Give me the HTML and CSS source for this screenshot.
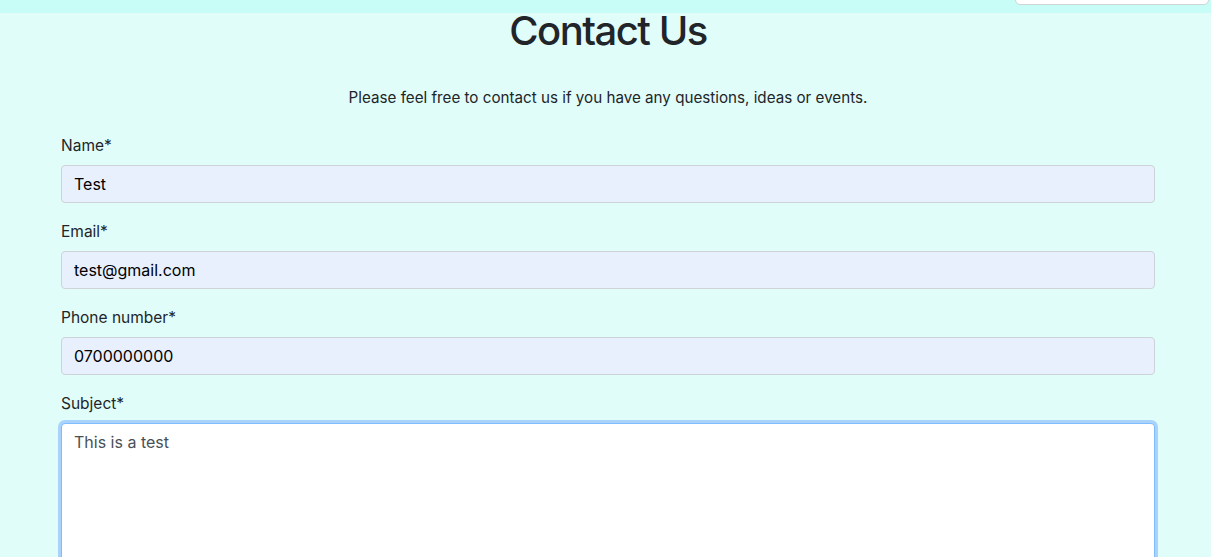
FILE: index.html
```html
<!DOCTYPE html>
<html lang="en">
<head>
<meta charset="utf-8">
<title>Contact Us</title>
<link rel="stylesheet" href="styles.css">
</head>
<body>
<header class="topbar">
  <div class="topbar-box"></div>
</header>
<main class="container">
  <h1 class="title">Contact Us</h1>
  <p class="intro">Please feel free to contact us if you have any questions, ideas or events.</p>
  <form class="contact-form">
    <div class="form-group">
      <label class="label" for="name">Name*</label>
      <input class="control autofill" id="name" type="text" value="Test">
    </div>
    <div class="form-group">
      <label class="label" for="email">Email*</label>
      <input class="control autofill" id="email" type="email" value="test@gmail.com">
    </div>
    <div class="form-group">
      <label class="label" for="phone">Phone number*</label>
      <input class="control autofill" id="phone" type="text" value="0700000000">
    </div>
    <div class="form-group">
      <label class="label" for="subject">Subject*</label>
      <textarea class="control textarea focused" id="subject">This is a test</textarea>
    </div>
  </form>
</main>
</body>
</html>
```

FILE: styles.css
```css
html, body {
  margin: 0;
  padding: 0;
}
body {
  background: #e1fdfa;
  font-family: Inter, "Noto Sans", "Liberation Sans", sans-serif;
  color: #212529;
  font-size: 16px;
  line-height: 24px;
  overflow: hidden;
  height: 557px;
}
.topbar {
  position: fixed;
  top: 0;
  left: 0;
  right: 0;
  height: 13px;
  background: #c8fdf7;
  z-index: 10;
}
.topbar-box {
  position: absolute;
  right: 2px;
  top: -4px;
  width: 192px;
  height: 7px;
  background: #ffffff;
  border: 1px solid #cfd4d6;
  border-radius: 0 0 5px 5px;
}
.container {
  padding: 7px 56px 0 61px;
}
.title {
  margin: 0;
  text-align: center;
  font-size: 40px;
  line-height: 48px;
  font-weight: 500;
  letter-spacing: -1.5px;
  color: #212529;
}
.intro {
  margin: 31px 0 23px;
  text-align: center;
  font-size: 15.2px;
  line-height: 24px;
}
.contact-form {
  display: flex;
  flex-direction: column;
  gap: 16px;
}
.form-group {
  display: flex;
  flex-direction: column;
  gap: 8px;
}
.label {
  font-size: 15.5px;
  line-height: 24px;
  padding-top: 1px;
  margin-bottom: -1px;
}
.control {
  box-sizing: border-box;
  width: 100%;
  height: 38px;
  margin: 0;
  padding: 6px 12px;
  font-family: Inter, "Noto Sans", "Liberation Sans", sans-serif;
  font-size: 16px;
  line-height: 24px;
  border: 1px solid #cdd3d9;
  border-radius: 4px;
  outline: none;
}
.autofill {
  background: #e8f0fe;
  color: #000000;
}
.textarea {
  height: 160px;
  resize: none;
  background: #ffffff;
  color: #495057;
  padding-top: 6px;
}
.focused {
  border-color: #80bdff;
  box-shadow: 0 0 0 3px #a9d3fc;
}
```
